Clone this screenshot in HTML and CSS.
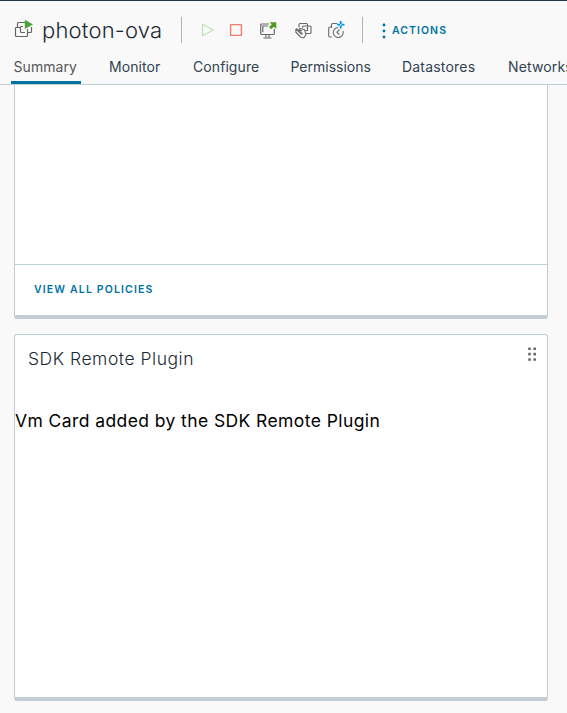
FILE: index.html
```html
<!DOCTYPE html>
<html lang="en">
<head>
<meta charset="utf-8">
<title>photon-ova</title>
<link rel="stylesheet" href="styles.css">
</head>
<body>
<header class="header">
  <svg class="vm-icon" width="20" height="20" viewBox="0 0 20 20" fill="none" stroke="#62666b" stroke-width="1.2">
    <path d="M3.500 8V4.500Q3.500 3.500 4.500 3.500H11M6.500 13V8.500Q6.500 7.500 7.500 7.500H9M11 13.500H7.500Q6.500 13.500 6.500 12.500M14 13.500H16.500Q17.500 13.500 17.500 12.500V8M6.500 8.500H2.500Q1.500 8.500 1.500 9.500V16.500Q1.500 17.500 2.500 17.500H12.500Q13.500 17.500 13.500 16.500V10"/>
    <path d="M10.800 .8V10L19 5.400Z" fill="#4ea03a" stroke="none"/>
  </svg>
  <h1 class="title">photon-ova</h1>
  <span class="rule"></span>
  <div class="tools">
    <svg width="14" height="14" viewBox="0 0 14 14" fill="none" stroke="#c1dfb5" stroke-width="1.2"><path d="M1.500 1.200V12.800L12.300 7Z" stroke-linejoin="round"/></svg>
    <svg class="stop" width="14" height="14" viewBox="0 0 14 14" fill="none" stroke="#f47b6b" stroke-width="1.400"><rect x="1.600" y="1.600" width="10.800" height="10.800" rx=".5"/></svg>
    <svg class="console" width="20" height="20" viewBox="0 0 20 20" fill="none" stroke="#6a6a6a" stroke-width="1.200">
      <path d="M10 4H2.700Q1.700 4 1.700 5V13.500Q1.700 14.500 2.700 14.500H14.300Q15.300 14.500 15.300 13.500V9M3.800 12.300V6H9M7 14.500V17.300M10 14.500V17.300M4.500 18H12.500"/>
      <path d="M10.500 2.200H17.300V9L14.900 6.800L12.300 9.200L10 7L12.800 4.500Z" fill="#4f9c1c" stroke="none"/>
    </svg>
    <svg class="migrate" width="20" height="20" viewBox="0 0 20 20" fill="none" stroke="#6a6a6a" stroke-width="1.100" stroke-linejoin="round">
      <path d="M5 7.500V4.500Q5 3.500 6 3.500H12.500Q13.500 3.500 13.500 4.500V10.500H11.500M8.500 8V7Q8.500 6 9.500 6H16Q17 6 17 7V12.500Q17 13.500 16 13.500H12"/>
      <path d="M1.300 11.500L3 10L8 14.500M1.300 11.500L6.500 17L9.800 18L12 14.500L10.500 9.500L5.500 8.500V9.800L8 11M1.300 10L3 8.800L8.500 14"/>
    </svg>
    <svg class="snapshot" width="20" height="20" viewBox="0 0 20 20" fill="none" stroke="#6a6a6a" stroke-width="1.100">
      <path d="M4.500 8V4.500Q4.500 3.500 5.500 3.500H10M4.500 7H3Q1.700 7 1.700 8.300V15.500Q1.700 17 3 17H5"/>
      <path d="M11 7.500A5 5 0 1 0 16 11M12.500 9.500L9.900 12.200L12.300 14.500"/>
      <path d="M13.700 1V8.500M10 4.700H17.500" stroke="#0097e6" stroke-width="1.800"/><circle cx="13.700" cy="4.700" r=".8" fill="#f9f9f9" stroke="none"/>
    </svg>
  </div>
  <span class="rule"></span>
  <button class="actions">
    <svg width="4" height="16" viewBox="0 0 4 16" fill="#0072a3"><circle cx="2" cy="2" r="1.400"/><circle cx="2" cy="8" r="1.400"/><circle cx="2" cy="14" r="1.400"/></svg>
    <span>ACTIONS</span>
  </button>
</header>
<nav class="tabs">
  <a class="tab summary">Summary</a>
  <a class="tab monitor">Monitor</a>
  <a class="tab configure">Configure</a>
  <a class="tab permissions">Permissions</a>
  <a class="tab datastores">Datastores</a>
  <a class="tab networks">Networks</a>
</nav>
<main class="content">
  <section class="card policies">
    <div class="card-body"></div>
    <footer class="card-footer"><a>VIEW ALL POLICIES</a></footer>
  </section>
  <section class="card plugin">
    <div class="card-head">
      <h2>SDK Remote Plugin</h2>
      <svg width="10" height="16" viewBox="0 0 10 16" fill="#666"><rect x="1.200" y=".5" width="2.600" height="2.600" rx=".6"/><rect x="6.400" y=".5" width="2.600" height="2.600" rx=".6"/><rect x="1.200" y="5.800" width="2.600" height="2.600" rx=".6"/><rect x="6.400" y="5.800" width="2.600" height="2.600" rx=".6"/><rect x="1.200" y="11.200" width="2.600" height="2.600" rx=".6"/><rect x="6.400" y="11.200" width="2.600" height="2.600" rx=".6"/></svg>
    </div>
    <p>Vm Card added by the SDK Remote Plugin</p>
  </section>
</main>
</body>
</html>
```
FILE: styles.css
```css
* { box-sizing: border-box; }
body {
  margin: 0;
  height: 713px;
  overflow: hidden;
  background: #f9f9f9;
  border-top: 1px solid #25333d;
  font-family: Inter, "Noto Sans", sans-serif;
  color: #1b2a32;
}
.header { display: flex; align-items: center; height: 58px; padding-left: 14px; }
.vm-icon { flex: none; margin-top: -3px; }
.title { width: 139px; margin: -1px 0 0 7px; padding-left: 1px; box-sizing: content-box; font-size: 22px; line-height: 30px; font-weight: 350; letter-spacing: .2px; white-space: nowrap; }
.rule { flex: none; width: 1px; height: 26px; background: #b3b3b3; }
.tools { display: flex; align-items: center; width: 180px; padding-left: 19px; }
.tools svg { flex: none; }
.stop { margin-left: 14px; }
.console { margin-left: 16px; }
.migrate { margin-left: 15px; }
.snapshot { margin-left: 13px; }
.actions {
  display: flex; align-items: center; gap: 6px;
  margin: 1px 0 0 19px; padding: 0; border: 0; background: none;
  font: 600 10.5px/16px Inter, sans-serif; letter-spacing: 1.05px; color: #0072a3;
}
.tabs { display: flex; height: 26px; padding-left: 11px; border-bottom: 1px solid #c1cdd4; font-size: 14px; line-height: 16px; color: #314351; }
.tab { flex: none; white-space: nowrap; letter-spacing: .08px; }
.summary { width: 70px; height: 25px; padding-left: 2.500px; border-bottom: 3px solid #0072a3; color: #565656; }
.monitor { width: 84px; margin-left: 28px; }
.configure { width: 97.500px; }
.permissions { width: 111.500px; letter-spacing: 0; }
.datastores { width: 106px; letter-spacing: .2px; }
.networks { letter-spacing: .15px; }
.content { display: flex; flex-direction: column; gap: 15px; padding: 0 19px 0 14px; }
.card { background: #fff; border: 1px solid #c1cdd4; border-bottom: 4px solid #c5cdd4; border-radius: 3px; }
.policies { height: 234px; border-top: 0; border-radius: 0 0 3px 3px; }
.card-body { height: 179px; }
.card-footer { height: 51px; padding: 17px 19px; border-top: 1px solid #c1cdd4; font-size: 10.5px; line-height: 16px; font-weight: 600; letter-spacing: 1.15px; color: #0072a3; }
.plugin { height: 367px; }
.card-head { display: flex; justify-content: space-between; padding: 12px 10px 0 13px; height: 74px; }
.card-head h2 { margin: 0; font-size: 17.500px; line-height: 24px; font-weight: 350; letter-spacing: .53px; }
.plugin p { margin: 0; font-size: 17.500px; line-height: 24px; letter-spacing: .41px; color: #000; white-space: nowrap; }
```
